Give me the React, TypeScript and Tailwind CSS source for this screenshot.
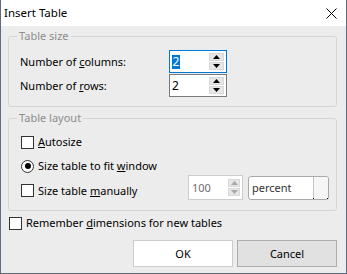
import React from "react";

function Arrows({ disabled, w = 15 }: { disabled?: boolean; w?: number }) {
  const c = disabled ? "#a8a8a8" : "#000";
  const half = (up: boolean) => (
    <div className="h-[8px] bg-[#e6e6e6] border border-[#d9d9d9] flex items-center justify-center">
      <svg width="7" height="4" viewBox="0 0 7 4">
        <path d={up ? "M3.5 0L7 4H0Z" : "M0 0H7L3.5 4Z"} fill={c} />
      </svg>
    </div>
  );
  return (
    <div className="flex flex-col gap-[1px] shrink-0" style={{ width: w }}>
      {half(true)}
      {half(false)}
    </div>
  );
}

function Check() {
  return <span className="w-[13px] h-[13px] border border-[#333333] bg-white shrink-0 block" />;
}

function Radio() {
  return (
    <span className="w-[13px] h-[13px] rounded-full border border-[#333333] bg-white shrink-0 flex items-center justify-center">
      <span className="w-[6px] h-[6px] rounded-full bg-black block" />
    </span>
  );
}

export default function App() {
  return (
    <div className="w-[347px] h-[274px] flex flex-col border-x border-b border-[#5f6b7c] font-['Noto_Sans',sans-serif] text-[11px] text-black leading-[16px] select-none">
      <div className="h-[26px] shrink-0 bg-white flex items-center justify-between pl-[3px] pr-[9px]">
        <span className="text-[11.5px]">Insert Table</span>
        <svg width="11" height="11" viewBox="0 0 11 11">
          <path d="M0.5 0.5L10.5 10.5M10.5 0.5L0.5 10.5" stroke="#000" strokeWidth="1" />
        </svg>
      </div>
      <div className="flex-1 bg-[#ececec] pl-[7px] pr-[9px] pt-[2px] flex flex-col">
        <fieldset className="border border-[#d5d5d5] rounded-[3px] pl-[11px] pb-[9px]">
          <legend className="ml-[-3px] px-[2px] text-[#8d8d8d] leading-[16px]">Table size</legend>
          <div className="flex items-center h-[23px] mt-[6px]">
            <span className="w-[149px]">
              Number of <u>c</u>olumns:
            </span>
            <div className="w-[58px] h-[23px] border border-[#0078d7] bg-white flex items-center pl-[2px] pr-[2px]">
              <span className="flex-1">
                <span className="bg-[#0078d7] text-white text-[12px] leading-[14px] inline-block px-[0.5px]">2</span>
              </span>
              <Arrows />
            </div>
          </div>
          <div className="flex items-center h-[23px] mt-[1px]">
            <span className="w-[149px]">
              Number of <u>r</u>ows:
            </span>
            <div className="w-[58px] h-[23px] border border-[#7a7a7a] bg-white flex items-center pl-[2px] pr-[2px]">
              <span className="flex-1 text-[12px]">2</span>
              <Arrows />
            </div>
          </div>
        </fieldset>

        <fieldset className="mt-[3px] border border-[#d5d5d5] rounded-[3px] pl-[12px] pb-[10px]">
          <legend className="ml-[-4px] px-[2px] text-[#8d8d8d] leading-[16px]">Table layout</legend>
          <div className="flex items-center h-[24px] mt-[4px]">
            <Check />
            <span className="ml-[4px]">
              <u>A</u>utosize
            </span>
          </div>
          <div className="flex items-center h-[24px]">
            <Radio />
            <span className="ml-[4px]">
              Size table to fit <u>w</u>indow
            </span>
          </div>
          <div className="flex items-center h-[25px] mt-[-3px]">
            <div className="w-[167px] flex items-center mt-[6px]">
              <Check />
              <span className="ml-[4px]">
                Size table <u>m</u>anually
              </span>
            </div>
            <div className="w-[55px] h-[25px] border border-[#cccccc] bg-white flex items-center pl-[3px] pr-[2px]">
              <span className="flex-1 text-[#6d6d6d]">100</span>
              <Arrows disabled w={12} />
            </div>
            <div className="ml-[5px] w-[81px] h-[24px] border border-[#a9a9a9] rounded-[3px] bg-white flex items-stretch">
              <span className="flex-1 pl-[3px] flex items-center text-[#333333]">percent</span>
              <span className="w-[15px] border-l border-[#c4c4c4] bg-[#f6f6f6] rounded-r-[2px] relative">
                <span className="absolute left-[-1px] bottom-0 w-[1px] h-[1px] bg-black" />
                <span className="absolute right-0 bottom-0 w-[1px] h-[1px] bg-black" />
              </span>
            </div>
          </div>
        </fieldset>

        <div className="flex items-center h-[14px] mt-[5px] pl-[1px]">
          <Check />
          <span className="ml-[4px]">
            Remember <u>d</u>imensions for new tables
          </span>
        </div>

        <div className="flex justify-end gap-[4px] mt-[10px]">
          <button className="w-[100px] h-[27px] bg-white border border-[#cccccc] flex items-center justify-center">
            OK
          </button>
          <button className="w-[100px] h-[27px] bg-[#e1e1e1] border border-[#adadad] flex items-center justify-center">
            Cancel
          </button>
        </div>
      </div>
    </div>
  );
}
